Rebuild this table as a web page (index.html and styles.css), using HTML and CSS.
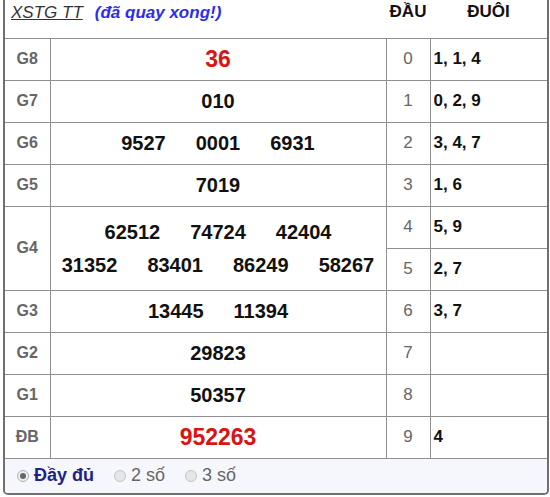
FILE: index.html
```html
<!DOCTYPE html>
<html lang="vi">
<head>
<meta charset="utf-8">
<title>XSTG TT</title>
<link rel="stylesheet" href="styles.css">
</head>
<body>
<div class="board">
  <table class="results">
    <colgroup>
      <col class="c-prize">
      <col class="c-nums">
      <col class="c-head">
      <col class="c-tail">
    </colgroup>
    <thead>
      <tr>
        <th colspan="2" class="title"><span class="t-name">XSTG TT</span><span class="t-status">(đã quay xong!)</span></th>
        <th class="h-col">ĐẦU</th>
        <th class="h-col">ĐUÔI</th>
      </tr>
    </thead>
    <tbody>
      <tr>
        <td class="prize">G8</td>
        <td class="nums"><div class="line"><span class="big red">36</span></div></td>
        <td class="head">0</td>
        <td class="tail">1, 1, 4</td>
      </tr>
      <tr>
        <td class="prize">G7</td>
        <td class="nums"><div class="line"><span>010</span></div></td>
        <td class="head">1</td>
        <td class="tail">0, 2, 9</td>
      </tr>
      <tr>
        <td class="prize">G6</td>
        <td class="nums"><div class="line"><span>9527</span><span>0001</span><span>6931</span></div></td>
        <td class="head">2</td>
        <td class="tail">3, 4, 7</td>
      </tr>
      <tr>
        <td class="prize">G5</td>
        <td class="nums"><div class="line"><span>7019</span></div></td>
        <td class="head">3</td>
        <td class="tail">1, 6</td>
      </tr>
      <tr>
        <td class="prize" rowspan="2">G4</td>
        <td class="nums" rowspan="2">
          <div class="line"><span>62512</span><span>74724</span><span>42404</span></div>
          <div class="line"><span>31352</span><span>83401</span><span>86249</span><span>58267</span></div>
        </td>
        <td class="head">4</td>
        <td class="tail">5, 9</td>
      </tr>
      <tr>
        <td class="head">5</td>
        <td class="tail">2, 7</td>
      </tr>
      <tr>
        <td class="prize">G3</td>
        <td class="nums"><div class="line"><span>13445</span><span>11394</span></div></td>
        <td class="head">6</td>
        <td class="tail">3, 7</td>
      </tr>
      <tr>
        <td class="prize">G2</td>
        <td class="nums"><div class="line"><span>29823</span></div></td>
        <td class="head">7</td>
        <td class="tail"></td>
      </tr>
      <tr>
        <td class="prize">G1</td>
        <td class="nums"><div class="line"><span>50357</span></div></td>
        <td class="head">8</td>
        <td class="tail"></td>
      </tr>
      <tr>
        <td class="prize">ĐB</td>
        <td class="nums"><div class="line"><span class="big red">952263</span></div></td>
        <td class="head">9</td>
        <td class="tail">4</td>
      </tr>
    </tbody>
  </table>
  <div class="options">
    <label class="opt active"><span class="radio on"></span>Đầy đủ</label>
    <label class="opt"><span class="radio"></span>2 số</label>
    <label class="opt"><span class="radio"></span>3 số</label>
  </div>
</div>
</body>
</html>
```

FILE: styles.css
```css
html, body {
  margin: 0;
  padding: 0;
  background: #ffffff;
}

body {
  font-family: "Liberation Sans", Arial, sans-serif;
  color: #111;
}

.board {
  margin-left: 3px;
  width: 542px;
  border: 2px solid #707070;
  border-top: none;
  border-radius: 0 0 5px 5px;
  overflow: hidden;
}

.results {
  width: 542px;
  border-collapse: collapse;
  table-layout: fixed;
}

.c-prize { width: 45px; }
.c-nums { width: 336px; }
.c-head { width: 44px; }
.c-tail { width: 117px; }

.results th {
  box-sizing: border-box;
  height: 38px;
  padding: 0;
  vertical-align: top;
  font-weight: bold;
}

.title {
  text-align: left;
  padding-left: 6px !important;
  padding-top: 3px !important;
  font-size: 17px;
  white-space: nowrap;
}

.t-name {
  font-style: italic;
  font-weight: normal;
  text-decoration: underline;
  color: #333;
  margin-right: 12px;
}

.t-status {
  font-style: italic;
  font-weight: bold;
  color: #2d2de8;
}

.h-col {
  font-size: 17px;
  color: #111;
  text-align: center;
  padding-top: 2px !important;
}

.results td {
  height: 41px;
  padding: 0;
  border: 1px solid #909090;
  vertical-align: middle;
}

.results tr td.prize {
  border-left: none;
}

.results td.tail {
  border-right: 1px solid #b8b8b8;
}

.prize {
  text-align: center;
  font-size: 16px;
  font-weight: bold;
  color: #666;
}

.nums {
  font-size: 20px;
  font-weight: bold;
  color: #111;
}

.line {
  display: flex;
  justify-content: center;
  gap: 30px;
  line-height: 24px;
}

.nums .line + .line {
  margin-top: 9px;
}

.big {
  font-size: 23px;
}

.red {
  color: #d81414;
}

.head {
  text-align: center;
  font-size: 17px;
  color: #666;
}

.tail {
  font-size: 17px;
  font-weight: bold;
  color: #111;
  padding-left: 3px !important;
}

.options {
  height: 34px;
  background: #f6f7fc;
  display: flex;
  align-items: center;
  padding-left: 12px;
  gap: 20px;
  font-size: 18px;
}

.opt {
  display: flex;
  align-items: center;
  color: #666;
}

.opt.active {
  color: #1d2288;
  font-weight: bold;
}

.radio {
  width: 10px;
  height: 10px;
  border-radius: 50%;
  border: 1px solid #c4c4c4;
  background: #e6e6e6;
  margin-right: 5px;
  position: relative;
}

.radio.on {
  background: #f0f0f0;
  border-color: #b0b0b0;
}

.radio.on::after {
  content: "";
  position: absolute;
  left: 2px;
  top: 2px;
  width: 6px;
  height: 6px;
  border-radius: 50%;
  background: #666;
}
```
